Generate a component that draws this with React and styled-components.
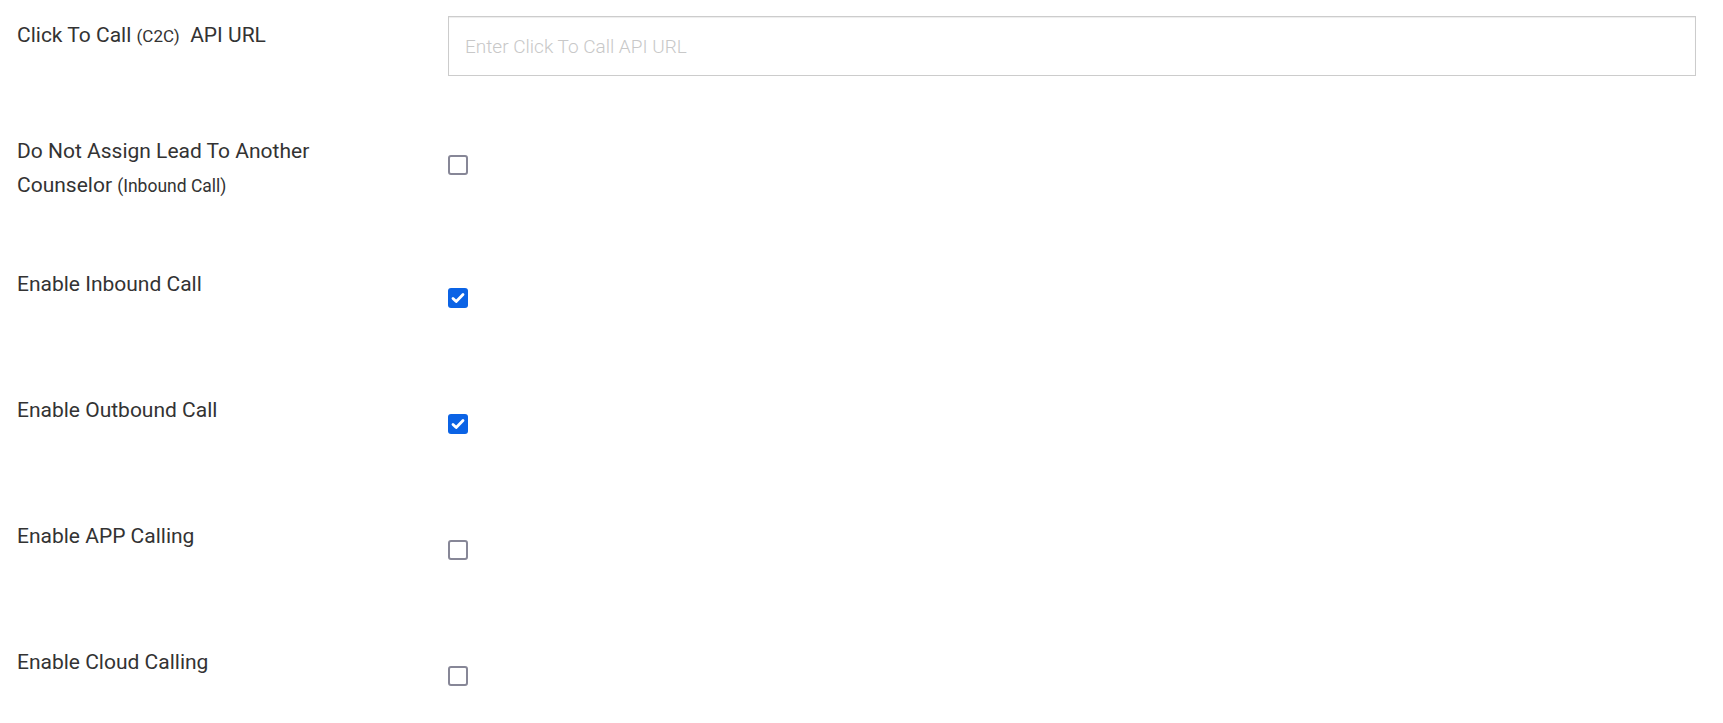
import React, { useState } from "react";
import styled, { createGlobalStyle } from "styled-components";

const GlobalStyle = createGlobalStyle`
  html, body {
    margin: 0;
    padding: 0;
    background: #ffffff;
  }
  body {
    font-family: Roboto, "Noto Sans", "Liberation Sans", sans-serif;
    color: #333333;
  }
  * {
    box-sizing: border-box;
  }
`;

const rows = [
  { id: "inbound", label: "Enable Inbound Call", checked: true },
  { id: "outbound", label: "Enable Outbound Call", checked: true },
  { id: "app", label: "Enable APP Calling", checked: false },
  { id: "cloud", label: "Enable Cloud Calling", checked: false },
];

function CheckBox({ defaultChecked }) {
  const [checked, setChecked] = useState(defaultChecked);
  return (
    <BoxLabel>
      <HiddenInput
        type="checkbox"
        checked={checked}
        onChange={() => setChecked(!checked)}
      />
      <Box $checked={checked}>
        {checked && (
          <svg width="16" height="16" viewBox="0 0 16 16" fill="none">
            <path
              d="M3 8.4l3.2 3.1 6.8-7"
              stroke="#ffffff"
              strokeWidth="2.8"
              strokeLinecap="round"
              strokeLinejoin="round"
            />
          </svg>
        )}
      </Box>
    </BoxLabel>
  );
}

function App() {
  const [url, setUrl] = useState("");
  const [noAssign] = useState(false);

  return (
    <>
      <GlobalStyle />
      <Form>
        <Row $gap={56}>
          <Label>
            Click To Call <Small>(C2C)</Small>&nbsp; API URL
          </Label>
          <InputCell>
            <TextInput
              value={url}
              onChange={(e) => setUrl(e.target.value)}
              placeholder="Enter Click To Call API URL"
            />
          </InputCell>
        </Row>

        <Row $gap={62}>
          <Label>
            Do Not Assign Lead To Another
            <br />
            Counselor <Note>(Inbound Call)</Note>
          </Label>
          <CheckCell>
            <CheckBox defaultChecked={noAssign} />
          </CheckCell>
        </Row>

        {rows.map((r) => (
          <Row key={r.id}>
            <Label>{r.label}</Label>
            <CheckCell>
              <CheckBox defaultChecked={r.checked} />
            </CheckCell>
          </Row>
        ))}
      </Form>
    </>
  );
}

export default App;

const Form = styled.div`
  width: 100%;
  padding: 16px 27px 0 16px;
  display: flex;
  flex-direction: column;
`;

const Row = styled.div`
  display: grid;
  grid-template-columns: 432px 1fr;
  align-items: start;
  margin-bottom: ${(p) => (p.$gap ? p.$gap : 64)}px;

  &:last-child {
    margin-bottom: 0;
  }
`;

const Label = styled.div`
  padding: 2px 0 0 1px;
  font-size: 21px;
  line-height: 34px;
  color: #333333;
`;

const Small = styled.span`
  font-size: 17px;
`;

const Note = styled.span`
  font-size: 17.5px;
`;

const InputCell = styled.div`
  display: flex;
`;

const TextInput = styled.input`
  width: 100%;
  height: 60px;
  border: 1px solid #cccccc;
  border-radius: 0;
  box-shadow: inset 0 1px 1px rgba(0, 0, 0, 0.075);
  padding: 0 16px;
  font-family: Roboto, "Noto Sans", "Liberation Sans", sans-serif;
  font-size: 19px;
  font-weight: 300;
  color: #333333;
  outline: none;

  &::placeholder {
    color: #c8c8c8;
    font-weight: 300;
  }
`;

const CheckCell = styled.div`
  min-height: 62px;
  padding-top: 23px;
  display: flex;
  align-items: flex-start;
`;

const BoxLabel = styled.label`
  display: inline-flex;
  cursor: pointer;
`;

const HiddenInput = styled.input`
  position: absolute;
  opacity: 0;
  width: 0;
  height: 0;
  margin: 0;
`;

const Box = styled.span`
  width: 20px;
  height: 20px;
  border-radius: 3px;
  display: flex;
  align-items: center;
  justify-content: center;
  border: ${(p) => (p.$checked ? "none" : "2.7px solid #878797")};
  background: ${(p) => (p.$checked ? "#0b63e5" : "#ffffff")};
`;
